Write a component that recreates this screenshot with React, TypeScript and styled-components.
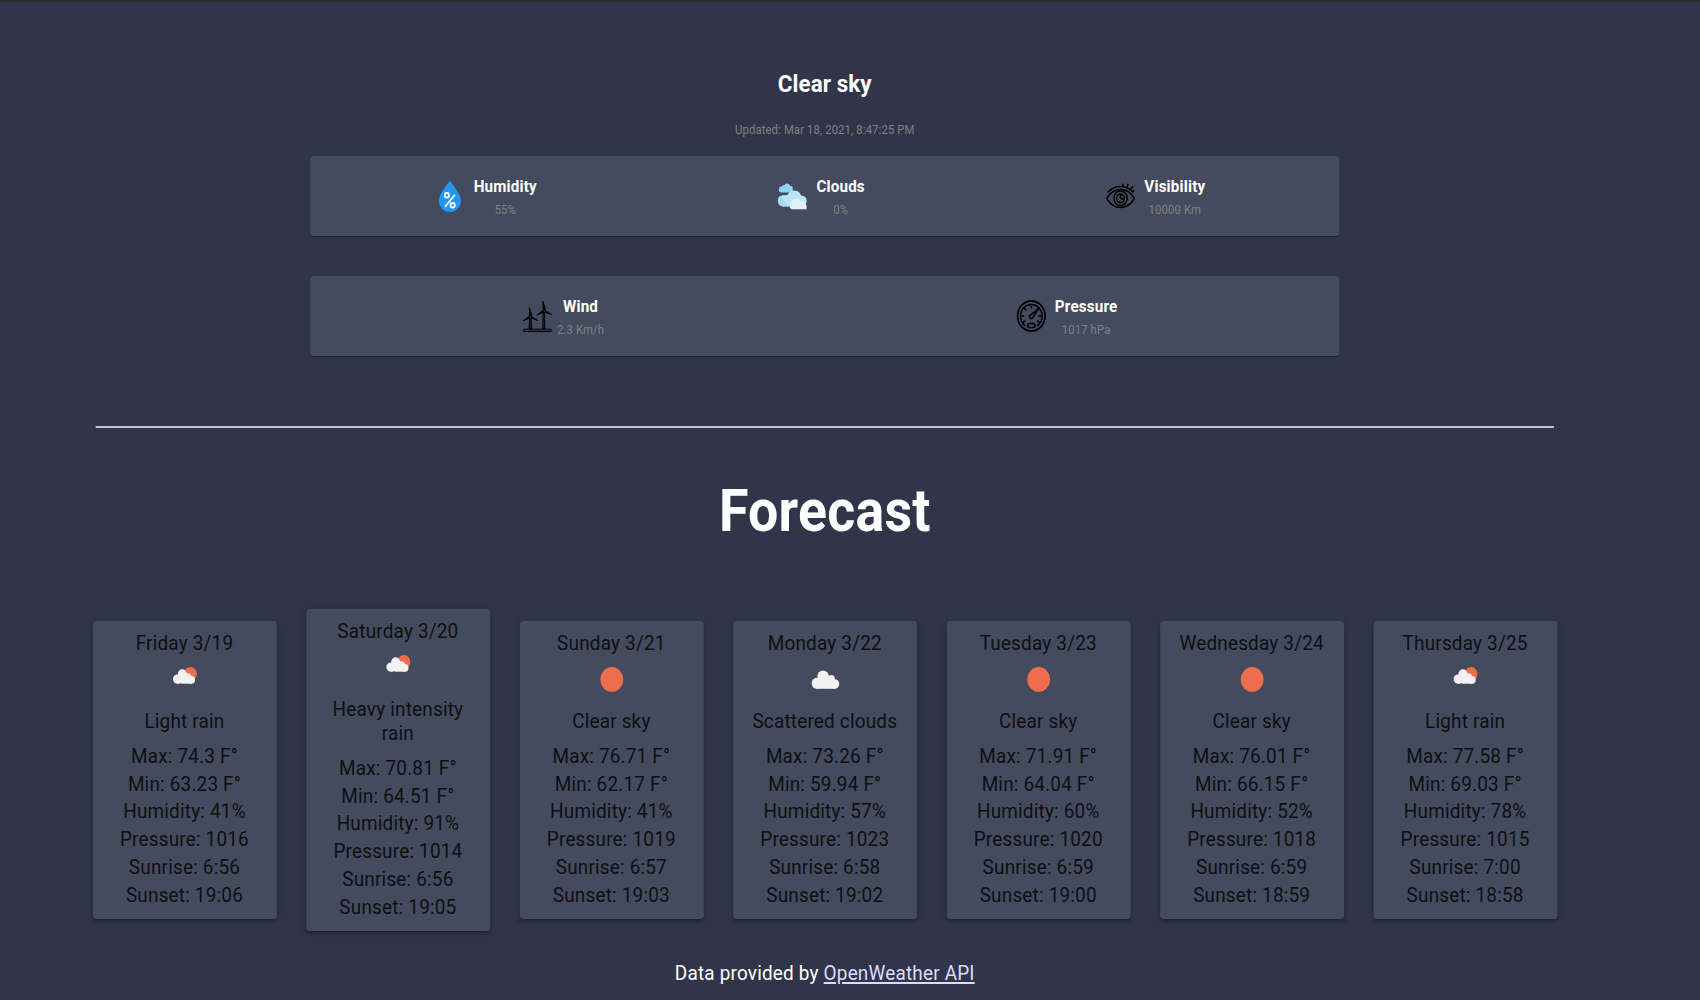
import React from 'react';
import styled, { createGlobalStyle } from 'styled-components';

const GlobalStyle = createGlobalStyle`
  html, body { margin: 0; background: #30354a; }
  body { overflow: hidden; }
  * { box-sizing: border-box; }
`;

const Page = styled.div`
  width: 1848px;
  height: 1000px;
  overflow: hidden;
  transform: scaleX(0.92);
  transform-origin: 0 0;
  background: #30354a;
  border-top: 2px solid #2b2b2d;
  font-family: Roboto, 'Liberation Sans', sans-serif;
  color: #fff;
`;

const Content = styled.main`
  width: 1793px;
  padding-top: 68px;
  display: flex;
  flex-direction: column;
  align-items: center;
`;

const Condition = styled.h2`
  margin: 0;
  font-size: 24.4px;
  line-height: 28px;
  font-weight: 700;
  letter-spacing: 0.06px;
`;

const Updated = styled.small`
  margin: 24px 0 18px;
  font-size: 12.3px;
  line-height: 16px;
  letter-spacing: 0.12px;
  color: #808080;
`;

const Panel = styled.section`
  width: 1119px;
  height: 80px;
  margin-bottom: 40px;
  padding: 0 12.5px 0 7.5px;
  display: flex;
  justify-content: space-around;
  align-items: center;
  background: #454b5e;
  border-radius: 4px;
  box-shadow: 0 2px 1px -1px rgba(0, 0, 0, 0.2), 0 1px 1px rgba(0, 0, 0, 0.14), 0 1px 3px rgba(0, 0, 0, 0.12);
`;

const Metric = styled.div`
  display: flex;
  align-items: center;
  gap: 5px;
  svg { display: block; }
`;

const MetricText = styled.div`
  display: flex;
  flex-direction: column;
  align-items: center;
`;

const MetricName = styled.h3`
  margin: 0;
  padding: 2px 5px 0;
  font-size: 16.5px;
  line-height: 22px;
  font-weight: 700;
  letter-spacing: 0.2px;
`;

const MetricValue = styled.span`
  margin-top: 3px;
  font-size: 12.3px;
  line-height: 18px;
  letter-spacing: 0.12px;
  color: #808080;
`;

const Divider = styled.hr`
  width: 1585px;
  height: 2px;
  margin: 30px 0 0;
  border: 0;
  background: #c4c4c6;
`;

const Heading = styled.h1`
  margin: 48px 0 0;
  font-size: 58.4px;
  line-height: 70px;
  font-weight: 700;
  letter-spacing: 0.25px;
`;

const Days = styled.section`
  height: 322px;
  margin-top: 63px;
  display: flex;
  align-items: center;
  gap: 32px;
`;

const DayCard = styled.article`
  width: 200px;
  padding: 9.4px 16px 9px;
  display: flex;
  flex-direction: column;
  align-items: center;
  text-align: center;
  font-size: 20.6px;
  line-height: 24px;
  letter-spacing: 0.2px;
  color: #0e0f12;
  background: #454b5e;
  border-radius: 4px;
  box-shadow: 0 3px 3px -2px rgba(0, 0, 0, 0.2), 0 3px 4px rgba(0, 0, 0, 0.14), 0 1px 8px rgba(0, 0, 0, 0.12);
  svg { display: block; }
`;

const DayName = styled.div`
  margin: 0 -16px;
  white-space: nowrap;
`;

const DayCondition = styled.div`
  margin: 4px 0 10.2px;
`;

const Reading = styled.div`
  line-height: 27.8px;
  white-space: nowrap;
`;

const Footer = styled.footer`
  margin-top: 30px;
  font-size: 20.6px;
  line-height: 24px;
  letter-spacing: 0.2px;
`;

const ApiLink = styled.a`
  color: #dcdcff;
  text-decoration: underline;
`;

const HumidityIcon = () => (
  <svg width="32" height="32" viewBox="0 0 32 32">
    <path d="M16 .5C12 6 4 14 4 20.5a12 11.5 0 0 0 24 0C28 14 20 6 16 .5z" fill="#2196f3" />
    <g fill="none" stroke="#fff" strokeWidth="1.9">
      <circle cx="12.7" cy="15.3" r="2.3" />
      <circle cx="19" cy="25.3" r="2.3" />
      <path d="M21.4 14.8 10.6 26.8" />
    </g>
  </svg>
);

const CloudsIcon = () => (
  <svg width="32" height="32" viewBox="0 0 32 32">
    <path d="M4.5 12.5a3 3 0 0 1 0-6 3.200 3.200 0 0 1 3-1.300 3.600 3.600 0 0 1 6.300.5 3.100 3.100 0 0 1 3 3.200c0 2-1.500 3.600-3.500 3.600z" fill="#8fd5f2" />
    <path d="M6 26.500a5.700 5.700 0 0 1 0-11.300l5-.3a8 7.600 0 0 1 14.700.6c4 .1 6.300 2.500 6.300 5.500 0 2.600-2 4.600-5 5z" fill="#b9e5fb" />
    <path d="M6 26.500a5.700 5.700 0 0 1-3-10.500L13.500 26.500z" fill="#a4dcf7" />
    <path d="M15.500 29.300a4.200 4.200 0 0 1-.5-7.300c1-3 3.200-3.600 5.300-3.600 2.300 0 3.800 1 4.500 2.400 3.300-.5 4.700 1.400 4.900 2.600 2 .8 2.600 3 2 5.900z" fill="#e1f1fb" />
  </svg>
);

const VisibilityIcon = () => (
  <svg width="32" height="32" viewBox="0 0 32 32" fill="none" stroke="#000" strokeWidth="1.6" strokeLinecap="round">
    <path d="M1 18.500C5 12 10 9.500 16 9.500s11 2.500 15 9c-4 6.500-9 9-15 9S5 25 1 18.500z" />
    <circle cx="16" cy="18.300" r="7.300" />
    <circle cx="16" cy="18.300" r="4.300" />
    <path d="M17.500 14.700c-3 1-2 5.300 1.500 4.100" />
    <path d="M2.500 12C10 4.800 20.500 4.800 29.500 11.800M18.500 6.700V4.300M22.700 8l1.400-3.500M26.300 9.900l3-3.300M29.500 11.800l.8-1.200" />
  </svg>
);

const WindIcon = () => (
  <svg width="32" height="32" viewBox="0 0 32 32" stroke="#000" strokeWidth="1" strokeLinejoin="round">
    <rect x=".6" y="29.200" width="30.800" height="2.300" rx="1" fill="#33384a" />
    <path d="M7 28.800 7.800 18h1.400l.8 10.800z" fill="#252a38" />
    <path d="M22 28.800 22.300 12h1.500l.4 16.800z" fill="#252a38" />
    <path d="M7.700 15.200 7.500 7.500 10 15.500zM8 15.500 1 20.800 7.800 17.800zM9.200 16l7.300 4.500L9 17.800z" fill="#111" />
    <path d="M22.500 9.500 22 1.500l3 8.300zM23 9.800l-7.500 5.400 7.200-3zM24 10.200l7.500 4.300-7.800-2.400z" fill="#111" />
    <circle cx="8.600" cy="16.500" r="1.500" fill="#252a38" />
    <circle cx="23.500" cy="11" r="1.500" fill="#252a38" />
  </svg>
);

const PressureIcon = () => (
  <svg width="32" height="32" viewBox="0 0 32 32" fill="none" stroke="#000" strokeWidth="1.600" strokeLinecap="round">
    <circle cx="16" cy="16" r="15" strokeWidth="1.900" />
    <path d="M9 25.500a11.700 11.700 0 1 1 14 0" />
    <path d="M16 4.700v3M4.700 16h3M27.300 16h-3M8 8l2 2M24 8l-2 2M7 22.500l2-1.500M25 22.500l-2-1.500" />
    <path d="M23.500 9 14.300 15.500a2 2 0 0 0 2.700 2.800z" />
    <rect x="12" y="23.500" width="8" height="4" rx="2" />
  </svg>
);

const SunIcon = () => (
  <svg width="50" height="50" viewBox="0 0 50 50">
    <circle cx="25" cy="24.400" r="12.400" fill="#ec6e4c" />
  </svg>
);

const CloudIcon = () => (
  <svg width="50" height="50" viewBox="0 0 50 50" fill="#f2f2f2">
    <circle cx="15.700" cy="28.300" r="5.500" />
    <circle cx="22.700" cy="21.700" r="6.300" />
    <circle cx="31.500" cy="24" r="3.900" />
    <circle cx="35.400" cy="29" r="4.800" />
    <rect x="15.700" y="23.800" width="19.700" height="10" />
  </svg>
);

const RainIcon = () => (
  <svg width="50" height="50" viewBox="0 0 50 50">
    <circle cx="31" cy="18.900" r="7" fill="#ec6e4c" />
    <g fill="#f2f2f2">
      <circle cx="16.600" cy="24.100" r="4.600" />
      <circle cx="22.100" cy="19.100" r="4.900" />
      <circle cx="28.300" cy="21.700" r="3.400" />
      <circle cx="32.200" cy="24.900" r="3.800" />
      <rect x="16.600" y="20.400" width="15.600" height="8.300" />
    </g>
    <path d="m17.600 30.500 2 3.500m.5-6 4 7.500m-.5-5 2 3.500" stroke="#484848" strokeWidth="1" fill="none" />
  </svg>
);

const skyIcons = { sun: SunIcon, cloud: CloudIcon, rain: RainIcon };

type Day = {
  name: string;
  icon: keyof typeof skyIcons;
  sky: string;
  max: string;
  min: string;
  humidity: number;
  pressure: number;
  sunrise: string;
  sunset: string;
};

const days: Day[] = [
  { name: 'Friday 3/19', icon: 'rain', sky: 'Light rain', max: '74.3', min: '63.23', humidity: 41, pressure: 1016, sunrise: '6:56', sunset: '19:06' },
  { name: 'Saturday 3/20', icon: 'rain', sky: 'Heavy intensity rain', max: '70.81', min: '64.51', humidity: 91, pressure: 1014, sunrise: '6:56', sunset: '19:05' },
  { name: 'Sunday 3/21', icon: 'sun', sky: 'Clear sky', max: '76.71', min: '62.17', humidity: 41, pressure: 1019, sunrise: '6:57', sunset: '19:03' },
  { name: 'Monday 3/22', icon: 'cloud', sky: 'Scattered clouds', max: '73.26', min: '59.94', humidity: 57, pressure: 1023, sunrise: '6:58', sunset: '19:02' },
  { name: 'Tuesday 3/23', icon: 'sun', sky: 'Clear sky', max: '71.91', min: '64.04', humidity: 60, pressure: 1020, sunrise: '6:59', sunset: '19:00' },
  { name: 'Wednesday 3/24', icon: 'sun', sky: 'Clear sky', max: '76.01', min: '66.15', humidity: 52, pressure: 1018, sunrise: '6:59', sunset: '18:59' },
  { name: 'Thursday 3/25', icon: 'rain', sky: 'Light rain', max: '77.58', min: '69.03', humidity: 78, pressure: 1015, sunrise: '7:00', sunset: '18:58' },
];

const panels = [
  [
    { name: 'Humidity', value: '55%', Icon: HumidityIcon },
    { name: 'Clouds', value: '0%', Icon: CloudsIcon },
    { name: 'Visibility', value: '10000 Km', Icon: VisibilityIcon },
  ],
  [
    { name: 'Wind', value: '2.3 Km/h', Icon: WindIcon },
    { name: 'Pressure', value: '1017 hPa', Icon: PressureIcon },
  ],
];

export default function App() {
  return (
    <>
      <GlobalStyle />
      <Page>
        <Content>
          <Condition>Clear sky</Condition>
          <Updated>Updated: Mar 18, 2021, 8:47:25 PM</Updated>
          {panels.map((metrics, i) => (
            <Panel key={i}>
              {metrics.map(({ name, value, Icon }) => (
                <Metric key={name}>
                  <Icon />
                  <MetricText>
                    <MetricName>{name}</MetricName>
                    <MetricValue>{value}</MetricValue>
                  </MetricText>
                </Metric>
              ))}
            </Panel>
          ))}
          <Divider />
          <Heading>Forecast</Heading>
          <Days>
            {days.map((day) => {
              const Icon = skyIcons[day.icon];
              return (
                <DayCard key={day.name}>
                  <DayName>{day.name}</DayName>
                  <Icon />
                  <DayCondition>{day.sky}</DayCondition>
                  <Reading>Max: {day.max} F°</Reading>
                  <Reading>Min: {day.min} F°</Reading>
                  <Reading>Humidity: {day.humidity}%</Reading>
                  <Reading>Pressure: {day.pressure}</Reading>
                  <Reading>Sunrise: {day.sunrise}</Reading>
                  <Reading>Sunset: {day.sunset}</Reading>
                </DayCard>
              );
            })}
          </Days>
          <Footer>
            Data provided by <ApiLink>OpenWeather API</ApiLink>
          </Footer>
        </Content>
      </Page>
    </>
  );
}
